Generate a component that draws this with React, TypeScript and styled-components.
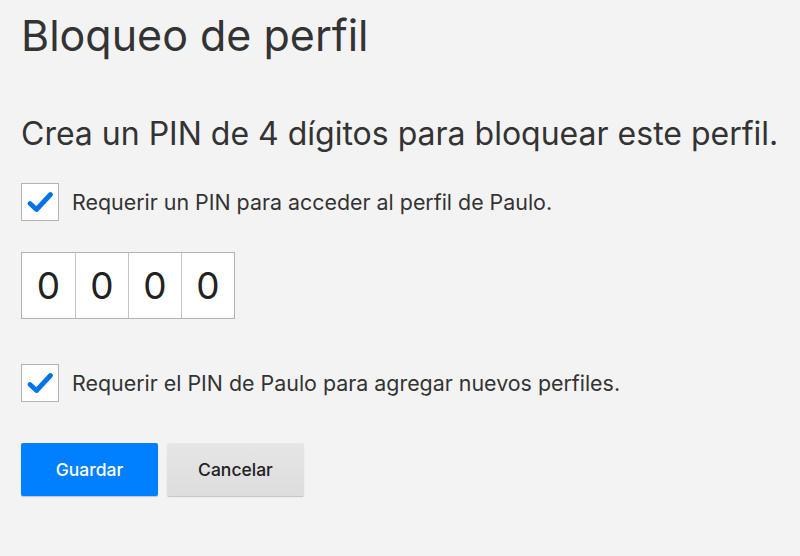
import React, { useState } from 'react';
import styled, { createGlobalStyle } from 'styled-components';

const GlobalStyle = createGlobalStyle`
  html, body {
    margin: 0;
    padding: 0;
    background: #f3f3f3;
  }
  body {
    font-family: Inter, "Noto Sans", Arial, sans-serif;
    color: #333;
  }
`;

const Page = styled.div`
  min-height: 556px;
  padding: 9px 21px 0;
  box-sizing: border-box;
  display: flex;
  flex-direction: column;
  align-items: flex-start;
`;

const Title = styled.h1`
  margin: 0;
  font-size: 43px;
  line-height: 52px;
  font-weight: 400;
  color: #333;
`;

const Subtitle = styled.h2`
  margin: 54px 0 0;
  font-size: 32px;
  line-height: 38px;
  font-weight: 400;
  color: #333;
`;

const CheckRow = styled.label<{ $top: number }>`
  display: flex;
  align-items: center;
  gap: 13px;
  margin-top: ${(p) => p.$top}px;
  font-size: 21.4px;
  color: #333;
  cursor: pointer;
`;

const CheckBox = styled.span`
  width: 38px;
  height: 38px;
  box-sizing: border-box;
  background: #fff;
  border: 1px solid #b3b3b3;
  display: flex;
  align-items: center;
  justify-content: center;
`;

const PinGroup = styled.div`
  display: flex;
  margin-top: 31px;
  border: 1px solid #b3b3b3;
  background: #fff;
`;

const PinCell = styled.input`
  width: 53px;
  height: 65px;
  box-sizing: border-box;
  border: none;
  border-left: 1px solid #c4c4c4;
  background: #fff;
  padding: 0;
  text-align: center;
  font-family: Inter, "Noto Sans", Arial, sans-serif;
  font-size: 37px;
  color: #222;
  outline: none;

  &:first-child {
    border-left: none;
  }
`;

const Actions = styled.div`
  display: flex;
  gap: 9px;
  margin-top: 41px;
`;

const Button = styled.button<{ $primary?: boolean }>`
  width: 137px;
  height: 53px;
  border: none;
  border-radius: 2px;
  font-family: Inter, "Noto Sans", Arial, sans-serif;
  font-size: 17.5px;
  font-weight: 500;
  cursor: pointer;
  color: ${(p) => (p.$primary ? '#fff' : '#222')};
  background: ${(p) =>
    p.$primary ? '#0080ff' : 'linear-gradient(180deg, #e6e6e6 0%, #dddddd 100%)'};
  box-shadow: 0 1px 1px rgba(0, 0, 0, 0.2);
`;

const Check = () => (
  <svg width="28" height="24" viewBox="0 0 28 24">
    <path
      d="M4 13.5 L10.5 19.5 L24.5 4.5"
      fill="none"
      stroke="#0073e6"
      strokeWidth="4.8"
      strokeLinecap="round"
      strokeLinejoin="round"
    />
  </svg>
);

const App: React.FC = () => {
  const [pin, setPin] = useState(['0', '0', '0', '0']);

  return (
    <>
      <GlobalStyle />
      <Page>
        <Title>Bloqueo de perfil</Title>
        <Subtitle>Crea un PIN de 4 dígitos para bloquear este perfil.</Subtitle>

        <CheckRow $top={30}>
          <CheckBox>
            <Check />
          </CheckBox>
          Requerir un PIN para acceder al perfil de Paulo.
        </CheckRow>

        <PinGroup>
          {pin.map((d, i) => (
            <PinCell
              key={i}
              value={d}
              maxLength={1}
              onChange={(e) => {
                const next = [...pin];
                next[i] = e.target.value;
                setPin(next);
              }}
            />
          ))}
        </PinGroup>

        <CheckRow $top={45}>
          <CheckBox>
            <Check />
          </CheckBox>
          Requerir el PIN de Paulo para agregar nuevos perfiles.
        </CheckRow>

        <Actions>
          <Button $primary>Guardar</Button>
          <Button>Cancelar</Button>
        </Actions>
      </Page>
    </>
  );
};

export default App;
